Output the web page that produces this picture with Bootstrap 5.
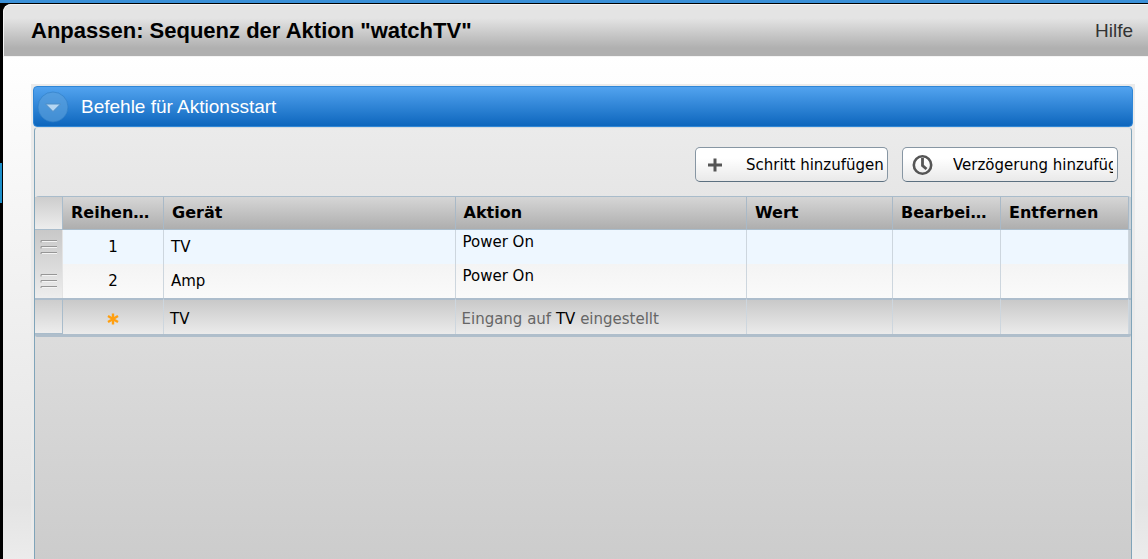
<!DOCTYPE html>
<html lang="de">
<head>
<meta charset="utf-8">
<meta name="viewport" content="width=device-width, initial-scale=1">
<title>Anpassen: Sequenz der Aktion "watchTV"</title>
<link href="https://cdn.jsdelivr.net/npm/bootstrap@5.3.0/dist/css/bootstrap.min.css" rel="stylesheet">
<style>
  html { background: #000; }
  body { background: linear-gradient(#3a90d8 3px, #000 3px, #000 163px, #1c8fca 163px, #1c8fca 203px, #000 203px); font-family: "DejaVu Sans", Verdana, sans-serif; font-size: 15px; line-height: 20px; color: #000; padding: 3px 0 0 2px; }
  .dialog-window { border: solid #000; border-width: 1px 0 0 1px; border-radius: 9px 0 0 0; background: linear-gradient(#fff 50px, #e4e4e4 500px, #ececec); overflow: hidden; }
  .dialog-bar { height: 53px; padding: 0 15px 0 27px; background: linear-gradient(#e4e4e4 13px, #b0b0b0 43px); border: solid #f4f4f4; border-width: 1px 0 1px 1px; border-radius: 8px 0 0 0; font-family: "Liberation Sans", Arial, sans-serif; }
  .dialog-bar h1 { font-size: 22px; line-height: 28px; font-weight: 700; }
  .dialog-bar a { color: #333; font-size: 19px; line-height: 24px; }
  .dialog-main { padding: 27px 13px 0 28px; }
  .section-frame { background: #ebebeb; padding: 2px 2px 0; }
  .section-bar { height: 41px; background: linear-gradient(#52a3ef, #0d66bd); border: 1px solid #2f86d6; border-radius: 4px; font-family: "Liberation Sans", Arial, sans-serif; }
  .section-bar h2 { font-size: 19px; line-height: 24px; }
  .toggle { width: 32px; height: 32px; margin: 0 12px 0 3px; }
  .section-body { margin: 0 1px; border: solid #80a4b9; border-width: 0 1px; border-top: 1px solid #d5dde2; border-radius: 4px 4px 0 0; background: linear-gradient(#ebebeb, #ccc); }
  .tools { padding: 19px 13px 14px; gap: 14px; }
  .tool { height: 35px; border: 1px solid #8796a3; border-bottom-color: #5c7080; border-radius: 5px; background: linear-gradient(#fff 30%, #e9e9e9); overflow: hidden; color: #000; white-space: nowrap; text-align: left; }
  .tool svg { flex: none; }
  .tool-step { width: 193px; }
  .tool-delay { width: 216px; }
  .tool-label { overflow: hidden; }
  .steps { table-layout: fixed; border-collapse: separate; border-spacing: 0; width: 100%; border-bottom: 3px solid #afbecb; border-top: 1px solid #a9bccb; border-radius: 4px 4px 2px 2px; }
  .steps th, .steps td { border-right: 1px solid #cdd6de; padding: 0 8px; }
  .steps thead th { height: 33px; border-right-color: #a9b9c7; border-bottom: 1px solid #a9bccb; background: linear-gradient(#d6d6d6, #aeaeae); font-size: 16px; white-space: nowrap; }
  .steps tbody td { height: 34px; padding: 0 7px; background: linear-gradient(#f4f4f4, #fafafa); }
  .steps tbody tr:first-child td { background: #eef7ff; }
  .steps tbody .command { padding-top: 2px; vertical-align: top; }
  .steps tbody .handle, .steps tbody tr:first-child .handle { padding: 0 0 0 5px; border-right-color: #e4e4e4; background: linear-gradient(#c8c8c8, #d9d9d9); }
  .steps tbody tr + tr .handle { background: linear-gradient(#d9d9d9, #eee); }
  .steps tfoot td { height: 36px; padding: 3px 6px 0; border-top: 2px solid #adbdcc; background: linear-gradient(#c9c9c9, #ebebeb); }
  .steps .corner, .steps thead .corner { border-right-color: #a9bccb; background: linear-gradient(#cdcdcd, #ededed); }
  .steps tfoot .corner { border-bottom: 1px solid #a9bccb; }
  .steps tr .edge, .steps tbody tr:first-child .edge { padding: 0; background: #c8d1d8; border-right: 0; }
  .quiet { color: #666; }
  .rest { height: 224px; }
</style>
<script src="https://cdn.jsdelivr.net/npm/bootstrap@5.3.0/dist/js/bootstrap.bundle.min.js"></script>
</head>
<body>
<div class="dialog-window">
  <header class="dialog-bar d-flex align-items-center justify-content-between">
    <h1 class="m-0">Anpassen: Sequenz der Aktion "watchTV"</h1>
    <a href="#" class="text-decoration-none">Hilfe</a>
  </header>
  <main class="dialog-main">
    <section class="section-frame">
      <div class="section-bar d-flex align-items-center text-white">
        <button type="button" class="toggle btn p-0 border-0 d-flex" aria-label="Einklappen">
          <svg width="32" height="32" viewBox="0 0 32 32"><circle cx="16" cy="16" r="15" fill="#5a9fdb" fill-opacity=".65" stroke="#2f7dc4" stroke-opacity=".6"/><path d="M8.500 13h15L16 20.500z" fill="#b5d6f2" stroke="#4d8dc6"/></svg>
        </button>
        <h2 class="m-0 fw-normal">Befehle für Aktionsstart</h2>
      </div>
      <div class="section-body">
        <div class="tools d-flex justify-content-end">
          <button type="button" class="tool tool-step d-flex align-items-center p-0">
            <svg width="50" height="33" viewBox="0 0 50 33"><path d="M12 17h14M19 10.500v13" stroke="#555" stroke-width="3"/></svg>
            <span class="tool-label">Schritt hinzufügen</span>
          </button>
          <button type="button" class="tool tool-delay d-flex align-items-center p-0 pe-1">
            <svg width="50" height="33" viewBox="0 0 50 33"><circle cx="19.500" cy="17" r="8.700" fill="none" stroke="#555" stroke-width="2.600"/><path d="M19.500 10v7.500l4 3.500" fill="none" stroke="#555" stroke-width="2.800"/></svg>
            <span class="tool-label">Verzögerung hinzufügen</span>
          </button>
        </div>
        <table class="steps">
          <colgroup><col style="width:28px"><col style="width:101px"><col><col><col style="width:146px"><col style="width:108px"><col style="width:128px"><col style="width:2px"></colgroup>
          <thead>
            <tr><th class="corner"></th><th>Reihen…</th><th>Gerät</th><th>Aktion</th><th>Wert</th><th>Bearbei…</th><th>Entfernen</th><th class="edge"></th></tr>
          </thead>
          <tbody>
            <tr>
              <td class="handle"><svg class="d-block" width="18" height="16" viewBox="0 0 18 16"><path d="M1 3.500V1.500H17M1 9.500V7.500H17M1 15V13.500H17" fill="none" stroke="#969696"/><path d="M2 2.500H17M2 8.500H17M2 14.500H17" stroke="#f4f4f4"/></svg></td>
              <td class="text-center">1</td><td>TV</td><td class="command">Power On</td><td></td><td></td><td></td><td class="edge"></td>
            </tr>
            <tr>
              <td class="handle"><svg class="d-block" width="18" height="16" viewBox="0 0 18 16"><path d="M1 3.500V1.500H17M1 9.500V7.500H17M1 15V13.500H17" fill="none" stroke="#969696"/><path d="M2 2.500H17M2 8.500H17M2 14.500H17" stroke="#f4f4f4"/></svg></td>
              <td class="text-center">2</td><td>Amp</td><td class="command">Power On</td><td></td><td></td><td></td><td class="edge"></td>
            </tr>
          </tbody>
          <tfoot>
            <tr>
              <td class="corner"></td>
              <td><svg class="d-block mx-auto" width="12" height="12" viewBox="0 0 12 12"><path d="M6 .5v11M1 3l10 6M1 9l10-6" stroke="#ff9f10" stroke-width="2.400"/></svg></td>
              <td>TV</td><td class="quiet">Eingang auf <span class="text-black">TV</span> eingestellt</td><td></td><td></td><td></td><td class="edge"></td>
            </tr>
          </tfoot>
        </table>
        <div class="rest"></div>
      </div>
    </section>
  </main>
</div>
</body>
</html>
